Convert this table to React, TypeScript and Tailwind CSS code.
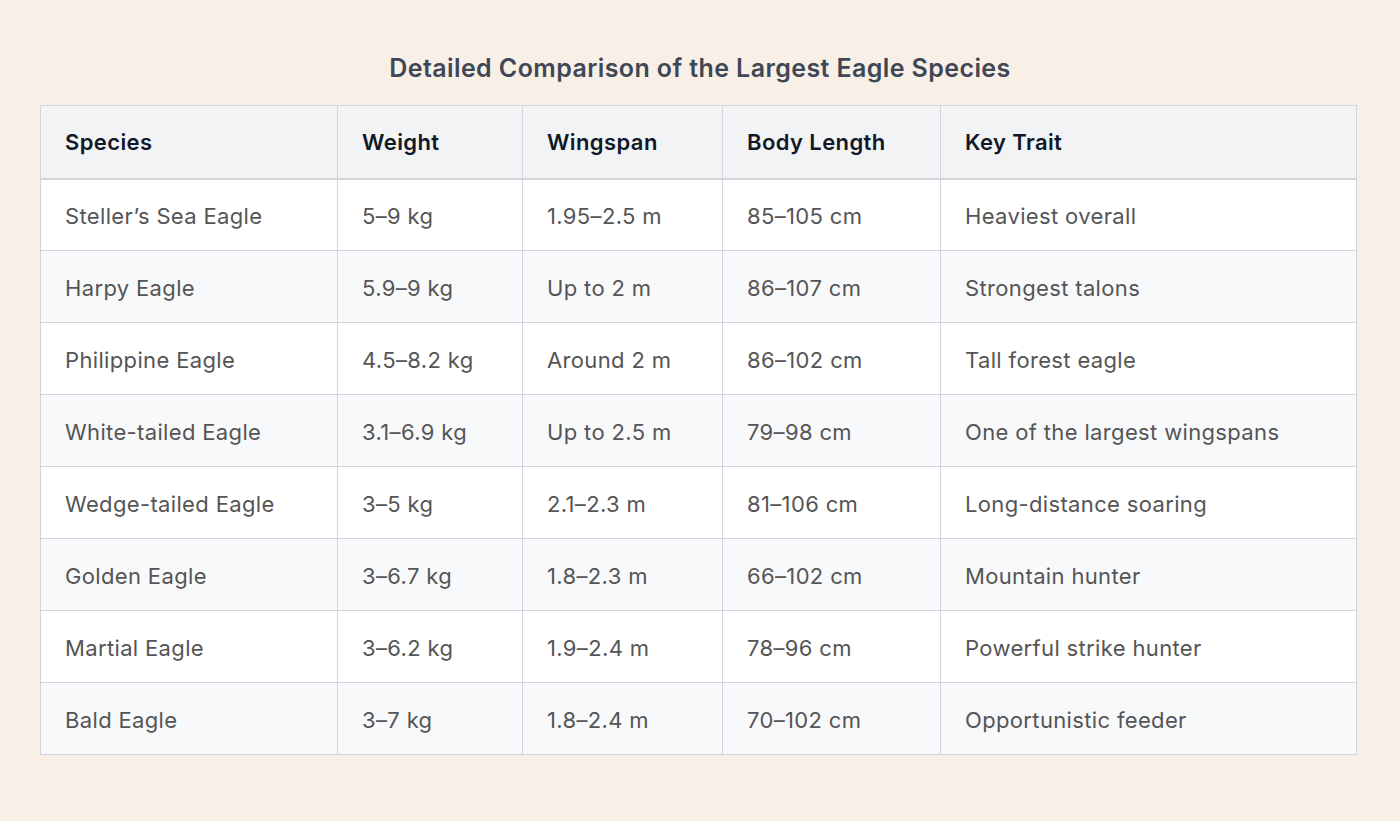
const rows = [
  ["Steller’s Sea Eagle", "5–9 kg", "1.95–2.5 m", "85–105 cm", "Heaviest overall"],
  ["Harpy Eagle", "5.9–9 kg", "Up to 2 m", "86–107 cm", "Strongest talons"],
  ["Philippine Eagle", "4.5–8.2 kg", "Around 2 m", "86–102 cm", "Tall forest eagle"],
  ["White-tailed Eagle", "3.1–6.9 kg", "Up to 2.5 m", "79–98 cm", "One of the largest wingspans"],
  ["Wedge-tailed Eagle", "3–5 kg", "2.1–2.3 m", "81–106 cm", "Long-distance soaring"],
  ["Golden Eagle", "3–6.7 kg", "1.8–2.3 m", "66–102 cm", "Mountain hunter"],
  ["Martial Eagle", "3–6.2 kg", "1.9–2.4 m", "78–96 cm", "Powerful strike hunter"],
  ["Bald Eagle", "3–7 kg", "1.8–2.4 m", "70–102 cm", "Opportunistic feeder"],
];

const headers = ["Species", "Weight", "Wingspan", "Body Length", "Key Trait"];
const widths = ["w-[297px]", "w-[185px]", "w-[200px]", "w-[218px]", "w-[416px]"];

export default function App() {
  return (
    <div className="min-h-[821px] w-full bg-[#f8f0e6] pt-[52px] font-['Inter',sans-serif]">
      <h1 className="text-center text-[25px] font-semibold leading-[32px] tracking-[0.4px] text-[#3f4756]">
        Detailed Comparison of the Largest Eagle Species
      </h1>
      <div className="mt-[21px] px-[40px]">
        <table className="w-[1317px] table-fixed border-collapse border border-[#d1d4de]">
          <thead>
            <tr className="h-[73px] bg-[#f2f3f5] border-b-2 border-[#d4d6dc]">
              {headers.map((h, i) => (
                <th
                  key={h}
                  className={`${widths[i]} border-r border-[#d1d4de] pl-[24px] pt-[2px] text-left text-[22px] font-semibold tracking-[0.4px] text-[#111827]`}
                >
                  {h}
                </th>
              ))}
            </tr>
          </thead>
          <tbody>
            {rows.map((r, ri) => (
              <tr
                key={r[0]}
                className={`h-[72px] border-b border-[#d1d4de] ${ri % 2 === 0 ? "bg-white" : "bg-[#f8f9fb]"}`}
              >
                {r.map((c, ci) => (
                  <td
                    key={ci}
                    className="border-r border-[#d1d4de] pl-[24px] pt-[3px] text-[22px] tracking-[0.35px] text-[#555555]"
                  >
                    {c}
                  </td>
                ))}
              </tr>
            ))}
          </tbody>
        </table>
      </div>
    </div>
  );
}
